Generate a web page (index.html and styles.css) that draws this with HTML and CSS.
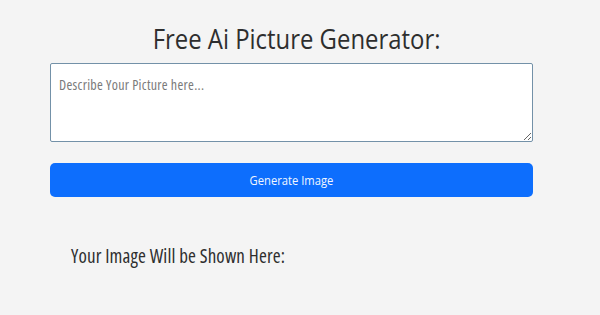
FILE: index.html
```html
<!DOCTYPE html>
<html lang="en">
<head>
<meta charset="utf-8">
<title>Free Ai Picture Generator</title>
<link rel="stylesheet" href="styles.css">
</head>
<body>
  <main class="generator">
    <h1 class="generator-title"><span class="title-text">Free Ai Picture Generator:</span></h1>
    <textarea class="prompt-input" placeholder="Describe Your Picture here..." autofocus></textarea>
    <button class="generate-btn" type="button"><span class="btn-text">Generate Image</span></button>
    <h2 class="result-title">Your Image Will be Shown Here:</h2>
  </main>
</body>
</html>
```

FILE: styles.css
```css
html, body {
  margin: 0;
  padding: 0;
  background: #f4f4f4;
}

body {
  font-family: "Open Sans", "Noto Sans", sans-serif;
  font-stretch: 75%;
  color: #333;
}

.generator {
  width: 483px;
  margin-left: 50px;
  display: flex;
  flex-direction: column;
}

.generator-title {
  margin: 23px 0 0 0;
  font-size: 27px;
  font-stretch: 100%;
  font-weight: 400;
  line-height: 1.2;
  text-align: center;
  padding-left: 11px;
  color: #2e2e2e;
}

.title-text {
  display: inline-block;
  transform: scaleX(0.885);
}

.prompt-input {
  display: block;
  box-sizing: border-box;
  width: 100%;
  height: 79px;
  margin-top: 8px;
  padding: 10px 8px;
  border: 1px solid #7391a8;
  border-radius: 2px;
  background: #fff;
  font-family: inherit;
  font-stretch: 75%;
  font-size: 14px;
  letter-spacing: 0.3px;
  line-height: 1.5;
  color: #333;
  outline: none;
  caret-color: #555;
}

.prompt-input::placeholder {
  color: #7a7a7a;
}

.generate-btn {
  margin-top: 21px;
  height: 34px;
  width: 100%;
  border: none;
  border-radius: 5px;
  background: #0d6efd;
  color: #f2f7ff;
  font-family: inherit;
  font-stretch: 100%;
  font-size: 13.5px;
  cursor: pointer;
}

.btn-text {
  display: inline-block;
  transform: scaleX(0.83);
}

.result-title {
  margin: 48px 0 0 0;
  padding-left: 21px;
  font-size: 19px;
  font-stretch: 75%;
  letter-spacing: 0.15px;
  font-weight: 400;
  line-height: 1.2;
  color: #2e2e2e;
}
```
